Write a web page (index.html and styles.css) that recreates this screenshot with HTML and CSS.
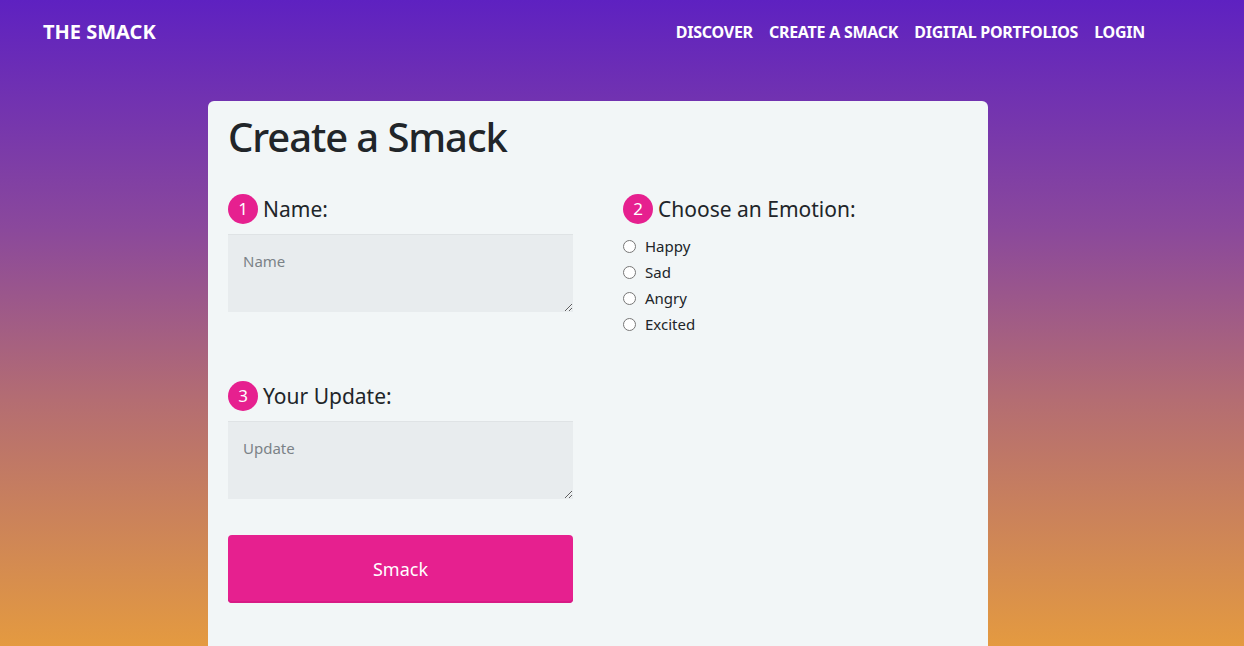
FILE: index.html
```html
<!DOCTYPE html>
<html>
<head>
<meta charset="utf-8">
<link rel="stylesheet" href="styles.css">
</head>
<body>
<header class="navbar">
  <a class="brand" href="#">THE SMACK</a>
  <nav class="nav">
    <a href="#">DISCOVER</a>
    <a href="#">CREATE A SMACK</a>
    <a href="#">DIGITAL PORTFOLIOS</a>
    <a href="#">LOGIN</a>
  </nav>
</header>
<main class="card">
  <h1 class="title">Create a Smack</h1>
  <div class="grid">
    <div class="col">
      <div class="field">
        <label class="label"><span class="num">1</span>Name:</label>
        <textarea class="input" placeholder="Name"></textarea>
      </div>
      <div class="field field-gap">
        <label class="label"><span class="num">3</span>Your Update:</label>
        <textarea class="input" placeholder="Update"></textarea>
      </div>
      <button class="btn">Smack</button>
    </div>
    <div class="col">
      <div class="field">
        <label class="label"><span class="num">2</span>Choose an Emotion:</label>
        <div class="radios">
          <label class="radio"><input type="radio" name="emo"><span>Happy</span></label>
          <label class="radio"><input type="radio" name="emo"><span>Sad</span></label>
          <label class="radio"><input type="radio" name="emo"><span>Angry</span></label>
          <label class="radio"><input type="radio" name="emo"><span>Excited</span></label>
        </div>
      </div>
    </div>
  </div>
</main>
</body>
</html>
```

FILE: styles.css
```css
* { box-sizing: border-box; }
html, body { height: 100%; }
body {
  margin: 0;
  font-family: "Noto Sans", "Open Sans", sans-serif;
  color: #212529;
  background: linear-gradient(to bottom, #5e21c1 0%, #8a489c 35%, #b46d72 62%, #e49a40 100%);
  overflow: hidden;
}
.navbar {
  display: flex;
  align-items: center;
  justify-content: space-between;
  height: 63px;
  padding: 0 99px 0 43px;
}
.brand {
  color: #fff;
  text-decoration: none;
  font-weight: 700;
  font-size: 20px;
  letter-spacing: 0;
}
.nav { display: flex; gap: 16px; }
.nav a {
  color: #fff;
  text-decoration: none;
  font-weight: 700;
  font-size: 16px;
  letter-spacing: -0.25px;
}
.card {
  width: 780px;
  margin: 38px auto 0 208px;
  background: #f2f6f7;
  border-radius: 6px 6px 0 0;
  padding: 12px 20px 40px;
  min-height: 560px;
}
.title {
  margin: 0 0 33px;
  font-size: 40px;
  font-weight: 500;
  line-height: 1.2;
  letter-spacing: -1.1px;
}
.grid {
  display: grid;
  grid-template-columns: 345px 345px;
  column-gap: 50px;
}
.col { display: flex; flex-direction: column; }
.field { display: flex; flex-direction: column; }
.field-gap { margin-top: 69px; }
.label {
  display: flex;
  align-items: center;
  font-size: 21px;
  line-height: 30px;
  margin-bottom: 10px;
}
.num {
  width: 30px;
  height: 30px;
  border-radius: 50%;
  background: #e6208f;
  color: #fff;
  display: inline-flex;
  align-items: center;
  justify-content: center;
  font-size: 17px;
  margin-right: 5px;
}
.input {
  width: 345px;
  height: 78px;
  border: none;
  border-top: 1px solid #dfe3e5;
  background: #e8ecee;
  padding: 16px 15px;
  font-family: inherit;
  font-size: 15px;
  color: #495057;
  resize: vertical;
}
.input::placeholder { color: #7b8287; }
.btn {
  margin-top: 36px;
  height: 68px;
  width: 345px;
  border: none;
  border-radius: 4px;
  background: #e6208f;
  color: #fff;
  font-family: inherit;
  font-size: 18px;
  box-shadow: inset 0 -2px 0 #d81a85;
}
.radios { display: flex; flex-direction: column; margin-top: -1px; }
.radio {
  display: flex;
  align-items: center;
  height: 26px;
  font-size: 15px;
}
.radio input {
  margin: 0 9px 0 0;
  width: 13px;
  height: 13px;
}
```
